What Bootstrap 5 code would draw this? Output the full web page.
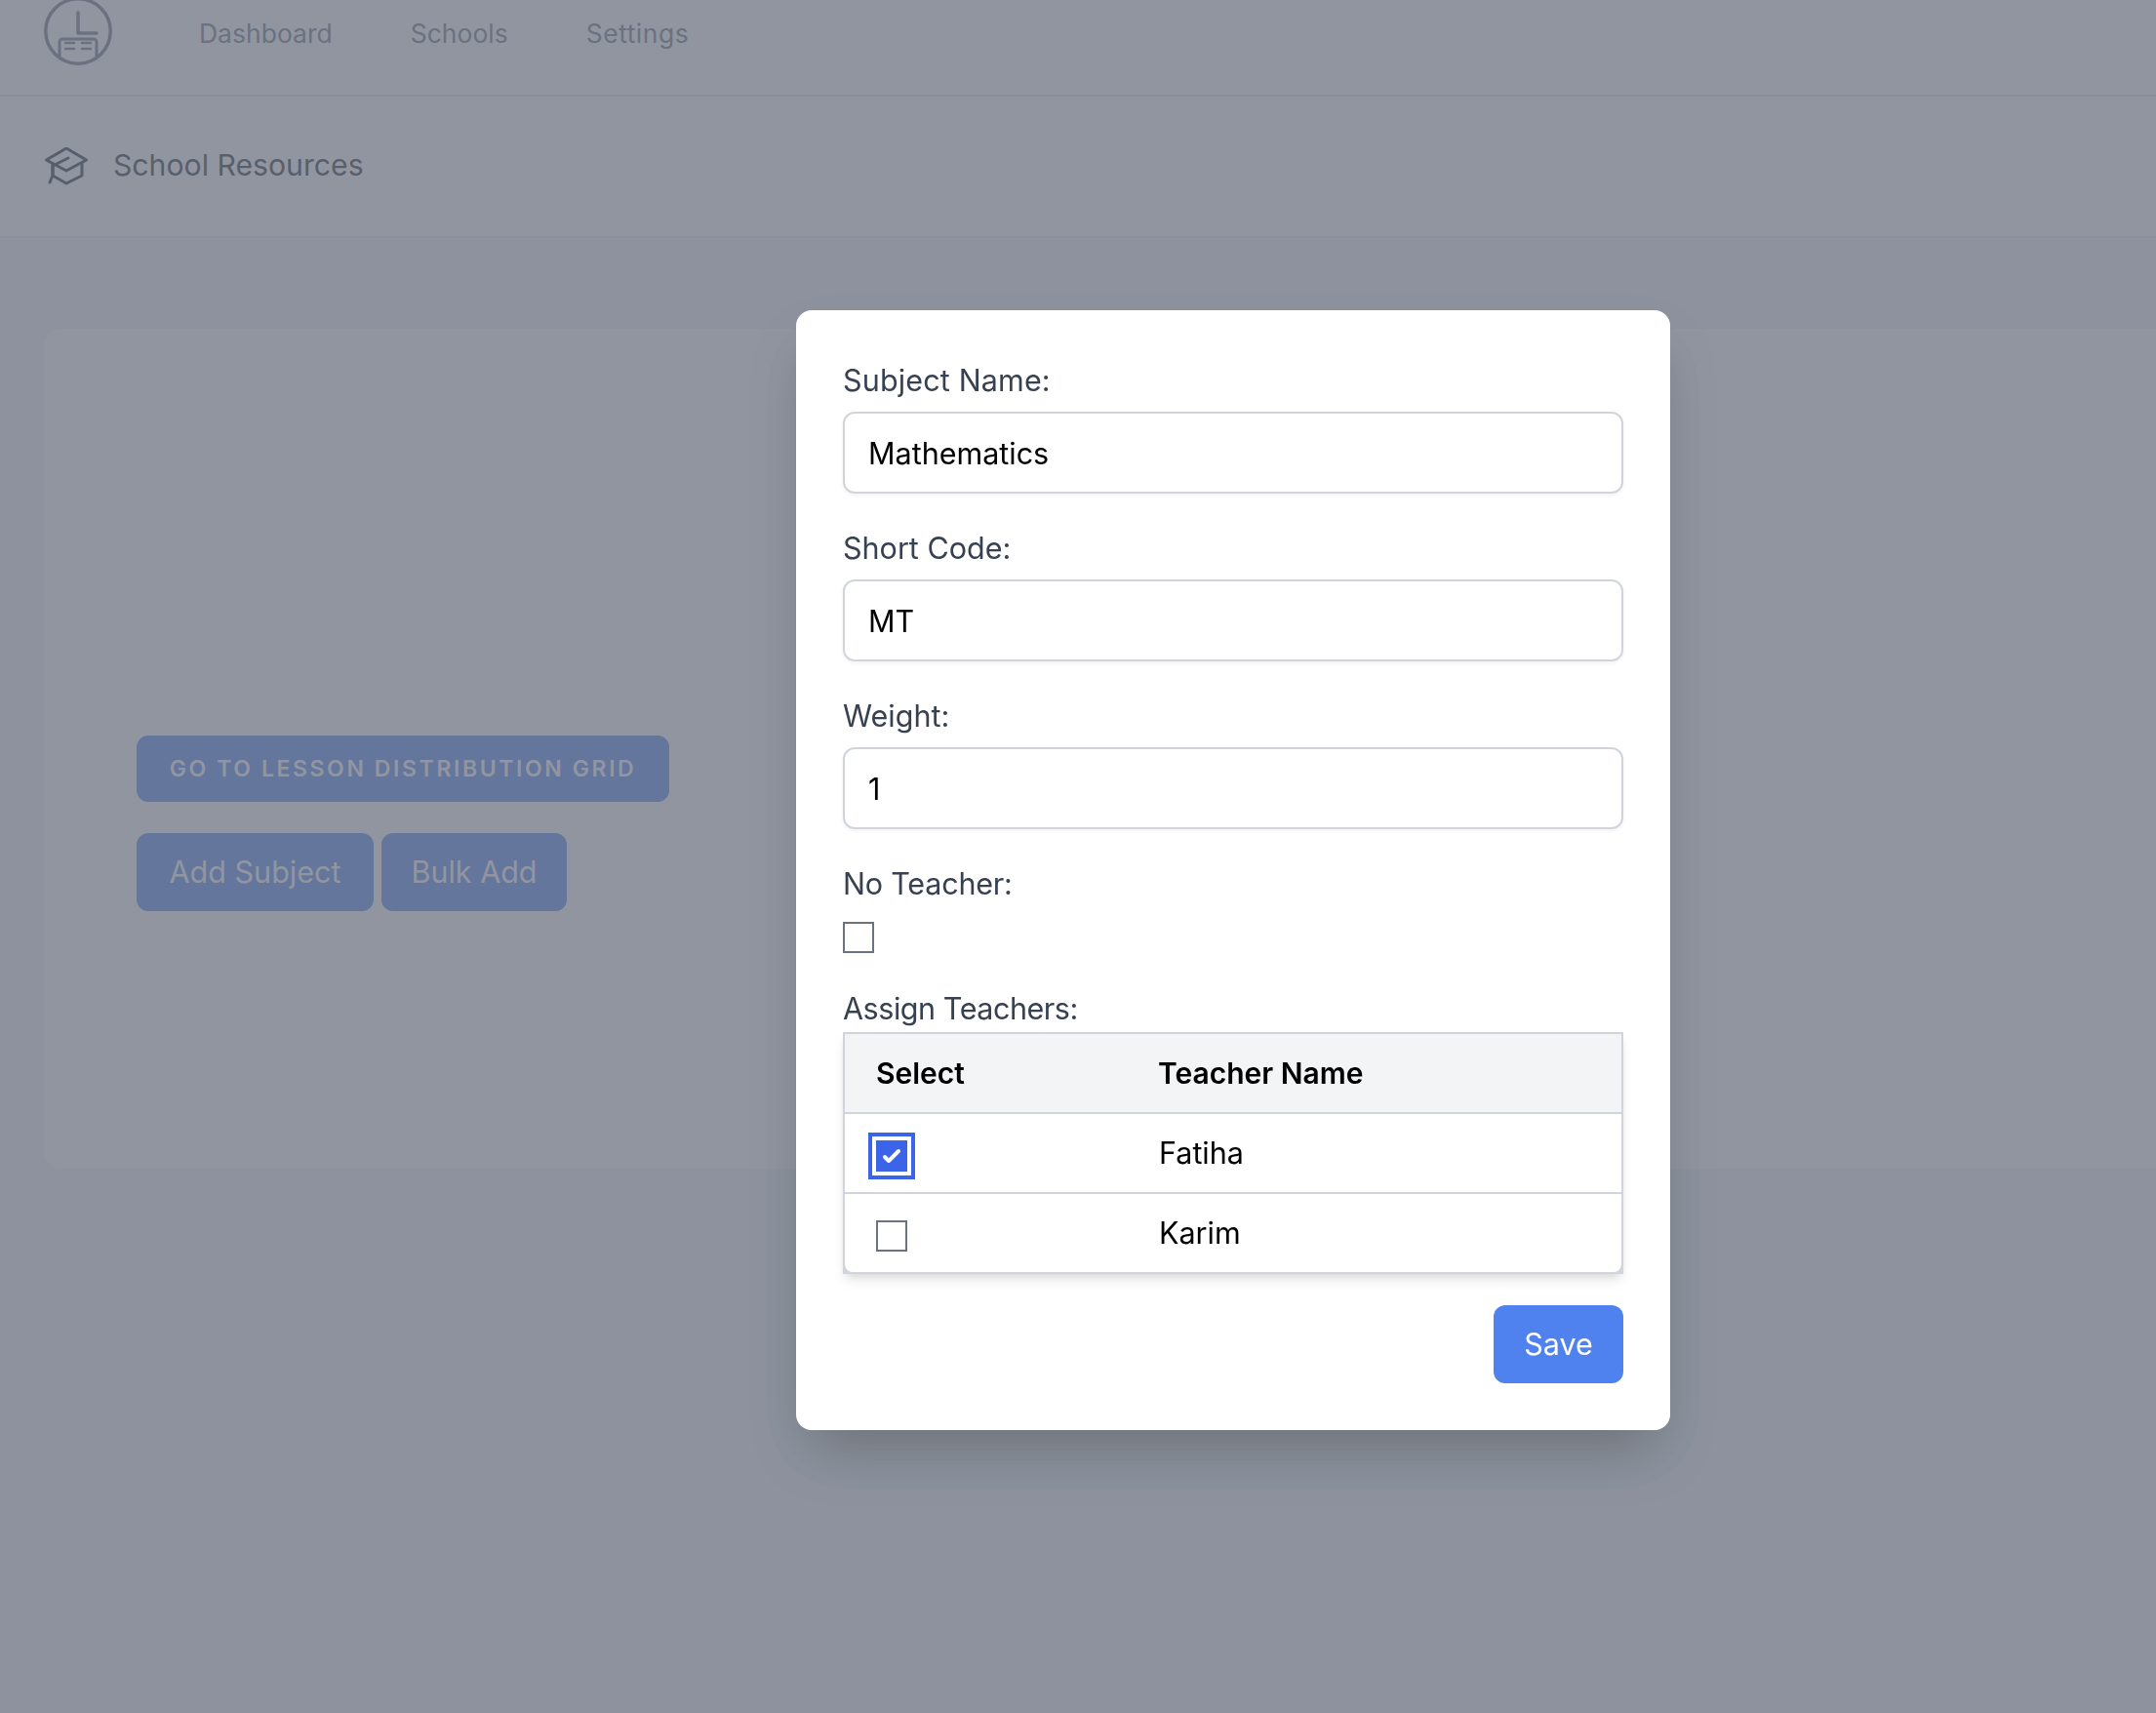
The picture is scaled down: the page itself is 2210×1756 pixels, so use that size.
<!DOCTYPE html>
<html lang="en">
<head>
<meta charset="utf-8">
<title>School Resources</title>
<link href="https://cdn.jsdelivr.net/npm/bootstrap@5.3.0/dist/css/bootstrap.min.css" rel="stylesheet">
<style>
html,body{height:100%;overflow:hidden}
body{background:#f3f4f6;font-family:Inter,"Liberation Sans",sans-serif;font-size:30.5px;color:#000}
.top-bar{height:99px;background:#fff;border-bottom:2px solid #e5e7eb;overflow:hidden;padding-left:45px;gap:89px}
.top-bar svg{margin-top:-3px;flex:none}
.top-links{gap:80px;font-size:26.5px;line-height:68px}
.top-links a{color:#6b7280;text-decoration:none}
.top-links .link-wide{letter-spacing:.5px}
.page-head{height:145px;background:#fff;border-bottom:2px solid #e5e7eb;padding-left:46px;gap:26px;font-size:30.2px;color:#1f2937}
.page-head span{margin-top:-1px}
.page-body{padding:93px 0 0 45px}
.work-card{height:861px;background:#fff;border-radius:16px 0 0 16px;padding-left:95px;padding-top:417px}
.btn-blue{background:#4f82ee;color:#fff;border:0;border-radius:12px;font-size:30.5px;height:80px;padding:0 32px}
.btn-caps{display:block;height:68px;width:546px;padding:0;font-size:23px;font-weight:600;letter-spacing:2.6px;text-transform:uppercase;margin-bottom:32px}
.btn-add{width:243px;padding:0}
.btn-bulk{width:190px;padding:0}
.dim-layer{position:fixed;inset:0;background:rgba(107,114,128,.75)}
.dialog-box{position:absolute;left:816px;top:318px;width:896px;height:1148px;background:#fff;border-radius:16px;padding:0 48px;box-shadow:0 30px 60px -14px rgba(0,0,0,.25)}
.field-label{display:block;color:#374151;line-height:48px;margin:0 0 8px}
.label-tight{letter-spacing:-.45px}
.label-snug{letter-spacing:-.2px}
.label-open{letter-spacing:.15px}
.field-input{display:block;width:100%;height:84px;border:2px solid #d1d5db;border-radius:12px;padding:0 24px;font-size:30.5px;color:#000;box-shadow:0 2px 4px rgba(0,0,0,.05);margin-bottom:32px;font-family:inherit}
.square{appearance:none;display:block;width:32px;height:32px;border:2px solid #6b7280;background:#fff;margin:0}
.square-on{background:#3b64e8;border:0;outline:4px solid #3b64e8;outline-offset:4px}
.check-wrap{padding:7px 0 33px}
.teach-table{width:800px;background:#d1d5db;border:2px solid #d1d5db;box-shadow:0 8px 12px -2px rgba(0,0,0,.1),0 4px 8px -4px rgba(0,0,0,.1);margin:0 0 32px;border-collapse:separate;border-spacing:0}
.teach-table th{background:#f3f4f6;height:82px;font-weight:600;font-size:30px;border-bottom:2px solid #d1d5db;padding:0 0 0 32px}
.teach-table td{background:#fff;height:82px;padding:0 0 0 33px;border-bottom:2px solid #d1d5db}
.teach-table td:first-child{padding:6px 0 0 32px}
.teach-table th:first-child,.teach-table td:first-child{width:289px}
.teach-table tr:last-child td{height:80px;border-bottom:0}
.teach-table tr:last-child td:first-child{border-bottom-left-radius:8px}
.teach-table tr:last-child td:last-child{border-bottom-right-radius:8px}
.save-btn{width:133px;padding:0}
.dialog-top{height:48px}
</style>
</head>
<body>
<nav class="top-bar d-flex align-items-start">
  <svg width="70" height="70" viewBox="0 0 70 70" fill="none" stroke="#6b7280" stroke-width="3.500" aria-label="logo"><circle cx="35" cy="35" r="33.2"/><path d="M35 16v21h19" stroke-linecap="round" stroke-linejoin="round"/><path d="M16 62V46a3 3 0 0 1 3-3h32a3 3 0 0 1 3 3v16" stroke-width="3"/><path d="M21 47h11M21 53h11M38 47h11M38 53h11" stroke-width="2.500"/></svg>
  <div class="top-links d-flex"><a href="#">Dashboard</a><a href="#">Schools</a><a href="#" class="link-wide">Settings</a></div>
</nav>
<header class="page-head d-flex align-items-center">
  <svg width="44" height="40" viewBox="0 0 44 40" fill="none" stroke="#1f2937" stroke-width="3" stroke-linejoin="round" stroke-linecap="round" aria-label="school"><path d="M1.500 13 22 1l20.500 12L22 24z"/><path d="M8 17v12l14 8 16-8V17"/><path d="M24 11 8 19v10l-3 7"/></svg>
  <span>School Resources</span>
</header>
<main class="page-body">
  <section class="work-card">
    <button class="btn-blue btn-caps">Go to Lesson Distribution Grid</button>
    <div class="d-flex gap-2">
      <button class="btn-blue btn-add">Add Subject</button>
      <button class="btn-blue btn-bulk">Bulk Add</button>
    </div>
  </section>
</main>
<div class="dim-layer">
  <div class="dialog-box">
    <div class="dialog-top"></div>
    <label class="field-label label-open">Subject Name:</label>
    <input class="field-input" value="Mathematics">
    <label class="field-label">Short Code:</label>
    <input class="field-input" value="MT">
    <label class="field-label">Weight:</label>
    <input class="field-input" value="1">
    <label class="field-label label-snug">No Teacher:</label>
    <div class="check-wrap"><input class="square" type="checkbox"></div>
    <div class="field-label mb-0 label-tight">Assign Teachers:</div>
    <table class="teach-table">
      <thead><tr><th>Select</th><th>Teacher Name</th></tr></thead>
      <tbody>
        <tr><td><svg class="square square-on" viewBox="0 0 16 16"><path fill="#fff" d="M12.207 4.793a1 1 0 010 1.414l-5 5a1 1 0 01-1.414 0l-2-2a1 1 0 011.414-1.414L6.500 9.086l4.293-4.293a1 1 0 011.414 0z"/></svg></td><td>Fatiha</td></tr>
        <tr><td><input class="square" type="checkbox"></td><td>Karim</td></tr>
      </tbody>
    </table>
    <div class="d-flex justify-content-end"><button class="btn-blue save-btn">Save</button></div>
  </div>
</div>
<script src="https://cdn.jsdelivr.net/npm/bootstrap@5.3.0/dist/js/bootstrap.bundle.min.js"></script>
</body>
</html>
